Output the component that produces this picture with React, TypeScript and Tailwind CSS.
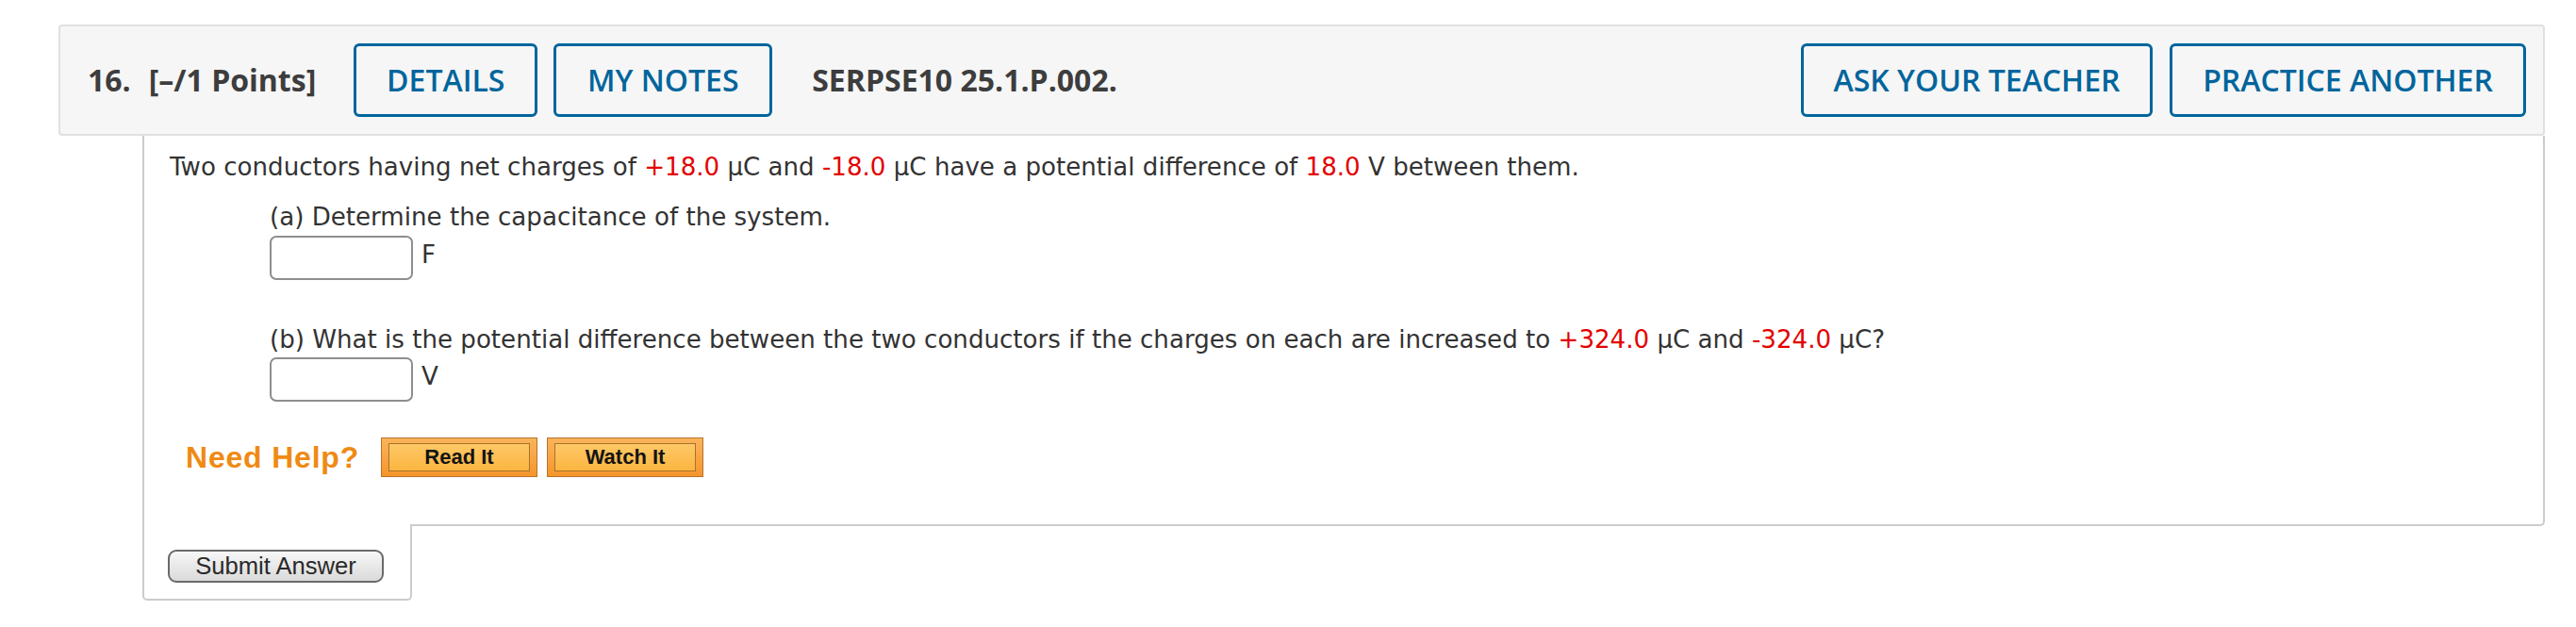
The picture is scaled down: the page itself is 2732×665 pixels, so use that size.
import React from "react";

const Red = ({ children }: { children: React.ReactNode }) => (
  <span className="text-[#e30000]">{children}</span>
);

function HeaderButton({ label, width }: { label: string; width: string }) {
  return (
    <button
      className={`${width} h-[78px] shrink-0 rounded-[6px] border-[3px] border-[#00659c] bg-transparent text-[32px] leading-[48px] font-semibold text-[#00659c]`}
    >
      {label}
    </button>
  );
}

function HelpButton({ label }: { label: string }) {
  return (
    <button className="w-[166px] h-[42px] shrink-0 border border-[#b8732a] bg-gradient-to-b from-[#fbb45a] to-[#f5952a] px-[7px] py-[5px]">
      <span className="flex h-full w-full items-center justify-center border border-[#a6742c] bg-gradient-to-b from-[#fec866] to-[#fbb53f] font-['Liberation_Sans',Arial,sans-serif] text-[22px] font-bold leading-none text-[#141414]">
        {label}
      </span>
    </button>
  );
}

function AnswerBox({ unit }: { unit: string }) {
  return (
    <div className="flex items-start gap-[9px]">
      <div className="h-[47px] w-[152px] rounded-[7px] border-2 border-[#8e8e8e] bg-white" />
      <span className="mt-[2px] leading-[36px]">{unit}</span>
    </div>
  );
}

export default function App() {
  return (
    <div className="min-h-[665px] bg-white pt-[26px] pl-[62px] pr-[33px]">
      {/* Question header */}
      <div className="flex h-[118px] items-center rounded-[4px] border-2 border-[#e0e0e0] bg-[#f6f6f6] pl-[29px] pr-[18px] font-['Open_Sans',sans-serif] text-[32px] text-[#3d3d3d]">
        <span className="font-bold">16.</span>
        <span className="ml-[19px] font-bold">[–/1 Points]</span>
        <div className="ml-[40px] flex gap-[17px]">
          <HeaderButton label="DETAILS" width="w-[195px]" />
          <HeaderButton label="MY NOTES" width="w-[232px]" />
        </div>
        <span className="ml-[42px] font-bold">SERPSE10 25.1.P.002.</span>
        <div className="ml-auto flex gap-[18px]">
          <HeaderButton label="ASK YOUR TEACHER" width="w-[373px]" />
          <HeaderButton label="PRACTICE ANOTHER" width="w-[378px]" />
        </div>
      </div>

      {/* Question body */}
      <div className="ml-[89px]">
        <div className="h-[414px] rounded-br-[5px] border-x-2 border-b-2 border-[#cccccc] pt-[15px] pl-[27px] font-['DejaVu_Sans',Verdana,sans-serif] text-[26.1px] leading-[36px] text-[#333333]">
          <p>
            Two conductors having net charges of <Red>+18.0</Red> μC and{" "}
            <Red>-18.0</Red> μC have a potential difference of <Red>18.0</Red> V
            between them.
          </p>

          <div className="mt-[17px] ml-[106px]">
            <p>(a) Determine the capacitance of the system.</p>
            <div className="mt-[2px]">
              <AnswerBox unit="F" />
            </div>
            <p className="mt-[45px]">
              (b) What is the potential difference between the two conductors
              if the charges on each are increased to <Red>+324.0</Red> μC and{" "}
              <Red>-324.0</Red> μC?
            </p>
            <div className="mt-[1px]">
              <AnswerBox unit="V" />
            </div>
          </div>

          <div className="mt-[38px] ml-[17px] flex items-center">
            <span className="font-['Liberation_Sans',Arial,sans-serif] text-[32px] font-bold leading-none tracking-[0.8px] text-[#ef8a14]">
              Need Help?
            </span>
            <div className="ml-[23px] flex gap-[10px]">
              <HelpButton label="Read It" />
              <HelpButton label="Watch It" />
            </div>
          </div>
        </div>

        {/* Submit tab */}
        <div className="relative -mt-[2px] h-[81px] w-[286px] rounded-b-[5px] border-x-2 border-b-2 border-[#cccccc] bg-white pt-[27px] pl-[25px]">
          <button className="h-[35px] w-[229px] rounded-[9px] border-2 border-[#6a6a6a] bg-gradient-to-b from-[#f7f7f7] to-[#dadada] font-['Liberation_Sans',Arial,sans-serif] text-[25.6px] leading-none text-[#2a2a2a]">
            Submit Answer
          </button>
        </div>
      </div>
    </div>
  );
}
